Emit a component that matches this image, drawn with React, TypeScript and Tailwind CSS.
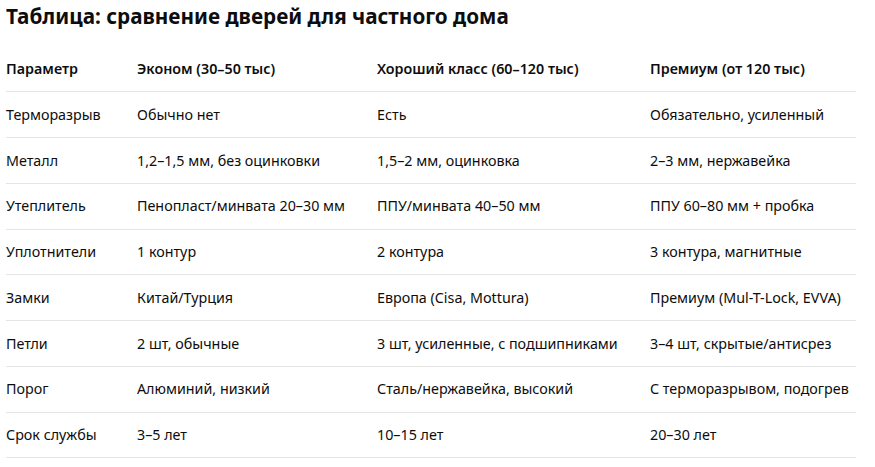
import React from "react";

const rows: string[][] = [
  ["Терморазрыв", "Обычно нет", "Есть", "Обязательно, усиленный"],
  ["Металл", "1,2–1,5 мм, без оцинковки", "1,5–2 мм, оцинковка", "2–3 мм, нержавейка"],
  ["Утеплитель", "Пенопласт/минвата 20–30 мм", "ППУ/минвата 40–50 мм", "ППУ 60–80 мм + пробка"],
  ["Уплотнители", "1 контур", "2 контура", "3 контура, магнитные"],
  ["Замки", "Китай/Турция", "Европа (Cisa, Mottura)", "Премиум (Mul-T-Lock, EVVA)"],
  ["Петли", "2 шт, обычные", "3 шт, усиленные, с подшипниками", "3–4 шт, скрытые/антисрез"],
  ["Порог", "Алюминий, низкий", "Сталь/нержавейка, высокий", "С терморазрывом, подогрев"],
  ["Срок службы", "3–5 лет", "10–15 лет", "20–30 лет"],
];

const header = ["Параметр", "Эконом (30–50 тыс)", "Хороший класс (60–120 тыс)", "Премиум (от 120 тыс)"];

const cols = "grid grid-cols-[131px_240px_273px_206px] w-[850px] h-[45.75px] items-center border-b border-[#e5e5e5]";

export default function App() {
  return (
    <div className="w-[875px] h-[467px] bg-white overflow-hidden pl-[6px] text-[#0d0d0d]" style={{ fontFamily: '"Noto Sans", sans-serif' }}>
      <div className="h-[46.5px] pt-[2px] text-[20.7px] font-bold leading-[29px]">Таблица: сравнение дверей для частного дома</div>
      <div className={cols + " text-[14.3px] font-semibold"}>
        {header.map((h, i) => (
          <div key={i}>{h}</div>
        ))}
      </div>
      {rows.map((r, i) => (
        <div key={i} className={cols + " text-[14.3px]"}>
          {r.map((c, j) => (
            <div key={j}>{c}</div>
          ))}
        </div>
      ))}
    </div>
  );
}
